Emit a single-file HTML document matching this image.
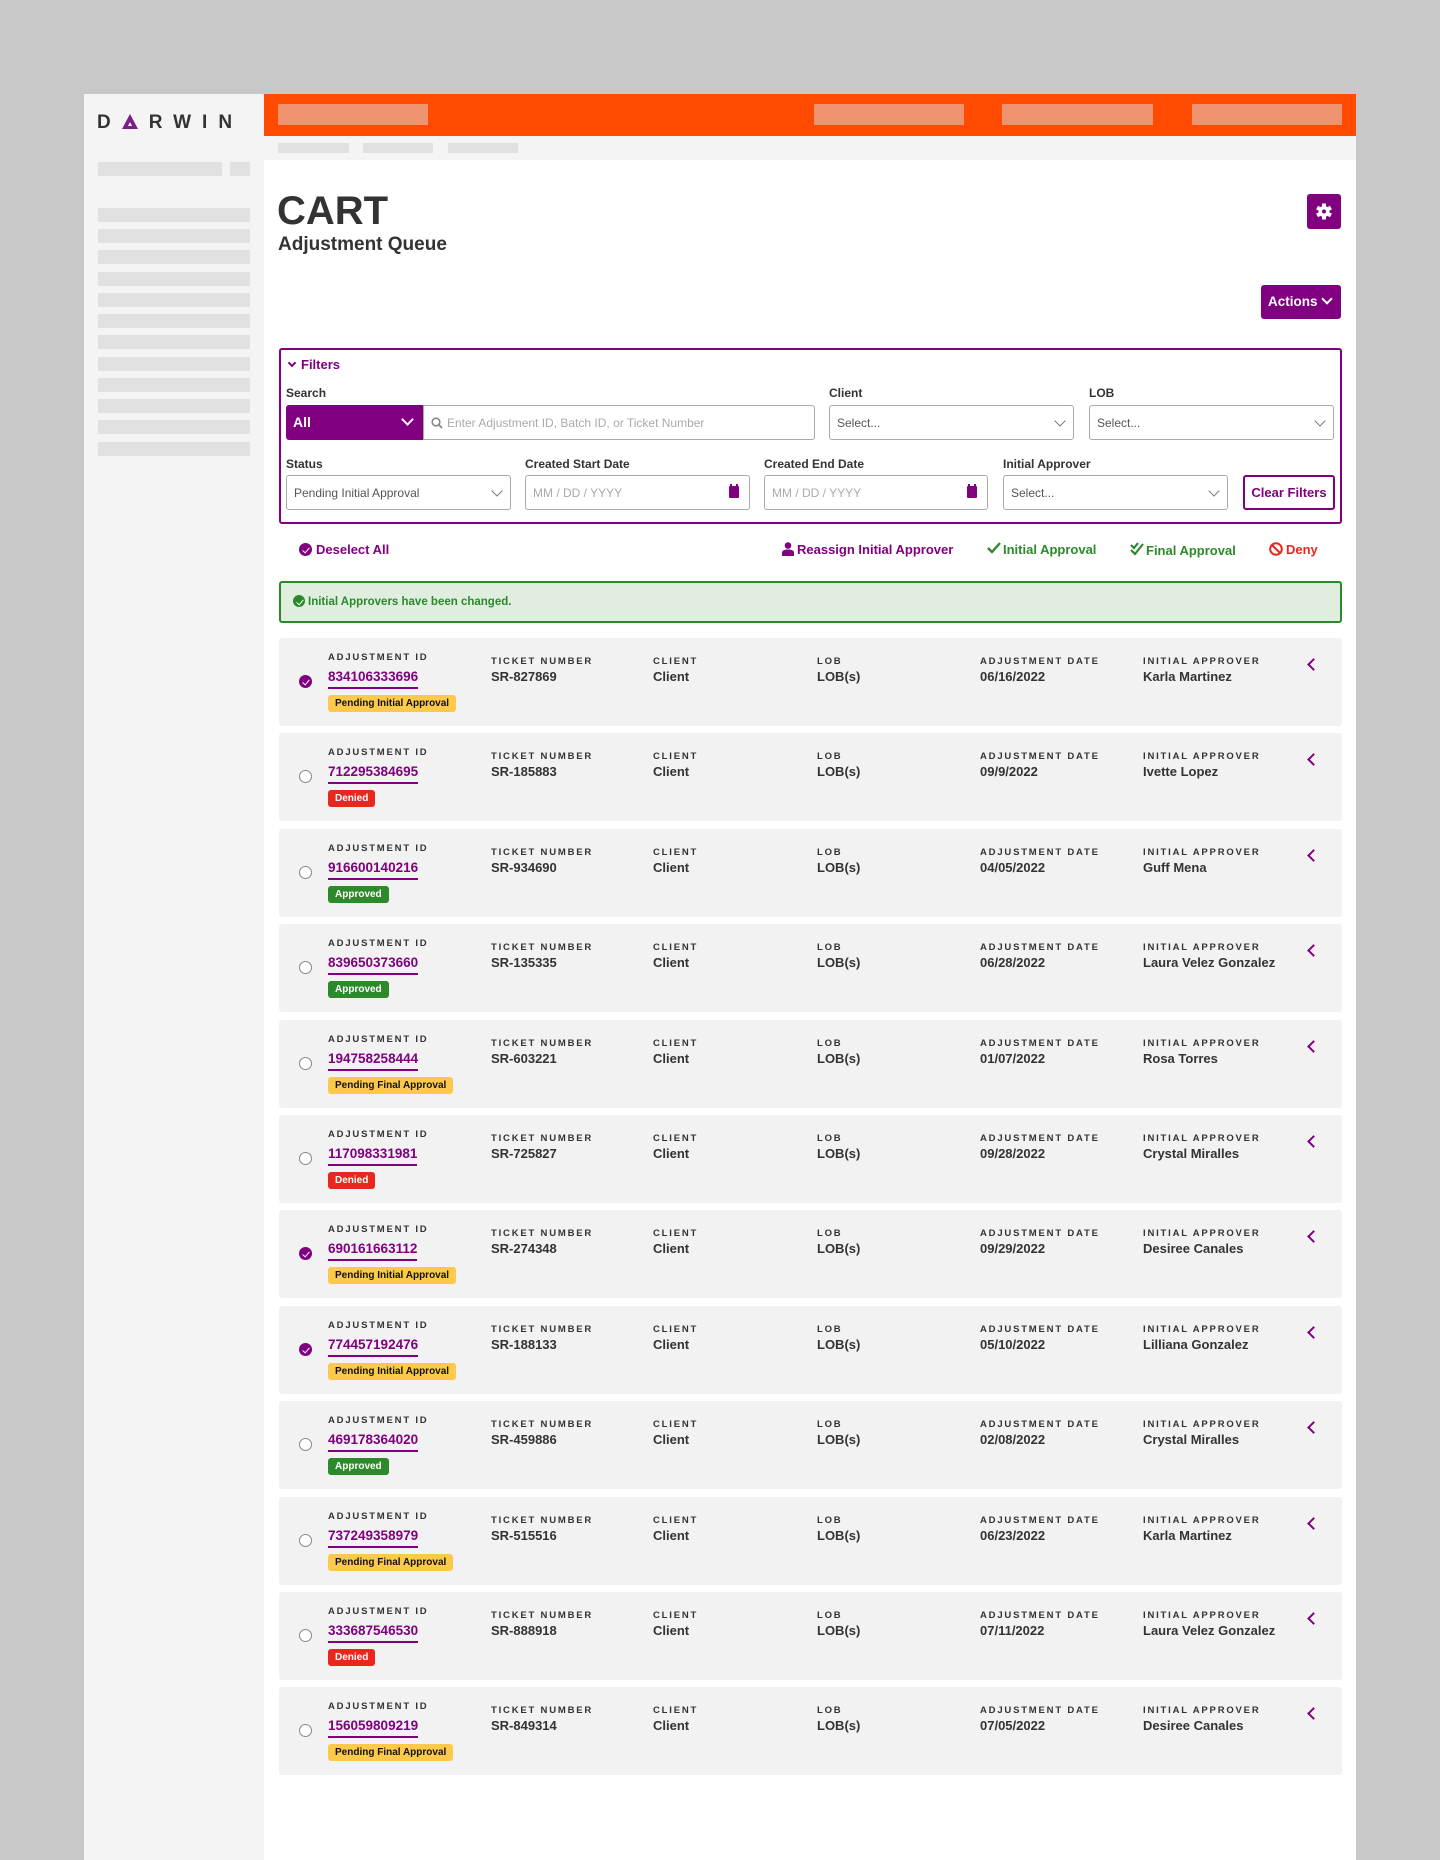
<!DOCTYPE html>
<html><head><meta charset="utf-8"><style>
*{margin:0;padding:0;box-sizing:border-box}
body{width:1440px;height:1860px;background:#c8c8c8;font-family:"Liberation Sans",Arial,sans-serif;position:relative;overflow:hidden;color:#333}
.abs{position:absolute}
.ph{position:absolute;background:#e1e1e1}
.oph{position:absolute;background:#ee9270;top:104px;height:21px}
.lbl{position:absolute;font-size:12px;font-weight:bold;color:#333}
.inp{position:absolute;border:1px solid #aaa;border-radius:3px;background:#fff;height:35px;font-size:12px;color:#555;padding:10px 7px}
.inp .car{position:absolute;right:9px;top:11px;width:8px;height:8px;border-right:1.5px solid #777;border-bottom:1.5px solid #777;transform:rotate(45deg)}
.ph2{color:#aaa}
.cal{position:absolute;right:10px;top:10px;width:10px;height:12px;background:#800080;border-radius:1px;border-top:3px solid #800080}
.cal:before,.cal:after{content:"";position:absolute;top:-5px;width:2px;height:3px;background:#800080}
.cal:before{left:1px}.cal:after{right:1px}
.row{position:absolute;left:279px;width:1063px;height:88px;background:#f2f2f2;border-radius:3px}
.row .h{position:absolute;top:18px;font-size:9.5px;font-weight:bold;letter-spacing:1.8px;color:#333}
.row .v{position:absolute;top:31px;font-size:13px;font-weight:bold;color:#333}
.row .id{position:absolute;left:49px;top:31px;font-size:13.5px;font-weight:bold;color:#800080;border-bottom:2.5px solid #800080;padding-bottom:3px}
.row .b{position:absolute;left:49px;top:57px;height:17px;font-size:10px;font-weight:bold;border-radius:3px;padding:3px 7px;line-height:11px}
.pend{background:#fcc94a;color:#111}
.den{background:#e8271e;color:#fff}
.app{background:#2c8a2a;color:#fff}
.rad{position:absolute;left:20px;top:37px;width:13px;height:13px;border:1.3px solid #888;border-radius:50%;background:#fff}
.chk{position:absolute;left:20px;top:37px;width:13px;height:13px;border-radius:50%;background:#800080}
.chk:after,.ck:after{content:"";position:absolute;left:4.5px;top:2.5px;width:3px;height:6px;border-right:1.6px solid #fff;border-bottom:1.6px solid #fff;transform:rotate(40deg)}
.ck{position:relative;display:inline-block;border-radius:50%;width:13px;height:13px;vertical-align:-2px;margin-right:4px}
.chev{position:absolute;left:1030px;top:22px;width:9px;height:9px;border-left:2.5px solid #800080;border-bottom:2.5px solid #800080;transform:rotate(45deg)}
</style></head><body>
<div class="abs" style="left:84px;top:94px;width:1272px;height:1766px;background:#fff"></div>
<div class="abs" style="left:84px;top:94px;width:180px;height:1766px;background:#f4f4f4"></div>
<div class="abs" style="left:97px;top:112px;font-size:19px;font-weight:bold;letter-spacing:11px;color:#333">D<svg width="16" height="15" viewBox="0 0 16 15" style="margin-right:11px;vertical-align:-1px"><path d="M8 0L16 15H0Z" fill="#7a1e8c"/><path d="M8 8L10 12H6Z" fill="#fff"/></svg>RWIN</div>
<div class="ph" style="left:98px;top:162px;width:124px;height:14px"></div>
<div class="ph" style="left:230px;top:162px;width:20px;height:14px"></div>
<div class="ph" style="left:98px;top:208px;width:152px;height:14px"></div>
<div class="ph" style="left:98px;top:229px;width:152px;height:14px"></div>
<div class="ph" style="left:98px;top:250px;width:152px;height:14px"></div>
<div class="ph" style="left:98px;top:272px;width:152px;height:14px"></div>
<div class="ph" style="left:98px;top:293px;width:152px;height:14px"></div>
<div class="ph" style="left:98px;top:314px;width:152px;height:14px"></div>
<div class="ph" style="left:98px;top:335px;width:152px;height:14px"></div>
<div class="ph" style="left:98px;top:357px;width:152px;height:14px"></div>
<div class="ph" style="left:98px;top:378px;width:152px;height:14px"></div>
<div class="ph" style="left:98px;top:399px;width:152px;height:14px"></div>
<div class="ph" style="left:98px;top:420px;width:152px;height:14px"></div>
<div class="ph" style="left:98px;top:442px;width:152px;height:14px"></div>

<div class="abs" style="left:264px;top:94px;width:1092px;height:42px;background:#ff4a00"></div>
<div class="oph" style="left:278px;width:150px"></div>
<div class="oph" style="left:814px;width:150px"></div>
<div class="oph" style="left:1002px;width:151px"></div>
<div class="oph" style="left:1192px;width:150px"></div>
<div class="abs" style="left:264px;top:136px;width:1092px;height:24px;background:#f4f4f4"></div>
<div class="ph" style="left:278px;top:143px;width:71px;height:10px"></div>
<div class="ph" style="left:363px;top:143px;width:70px;height:10px"></div>
<div class="ph" style="left:448px;top:143px;width:70px;height:10px"></div>

<div class="abs" style="left:277px;top:189px;font-size:40px;font-weight:bold;color:#333">CART</div>
<div class="abs" style="left:278px;top:234px;font-size:19px;font-weight:bold;color:#333">Adjustment Queue</div>
<div class="abs" style="left:1307px;top:194px;width:34px;height:35px;background:#800080;border-radius:3px">
<svg width="34" height="35" viewBox="0 0 34 35"><g transform="translate(17 17.5)" fill="#fff"><circle r="5.5"/><rect x="-2" y="-8" width="4" height="16"/><rect x="-2" y="-8" width="4" height="16" transform="rotate(60)"/><rect x="-2" y="-8" width="4" height="16" transform="rotate(120)"/><circle r="2" fill="#800080"/></g></svg></div>
<div class="abs" style="left:1261px;top:285px;width:80px;height:34px;background:#800080;border-radius:3px;color:#fff;font-size:13.5px;font-weight:bold;line-height:34px;padding-left:7px">Actions<span style="position:absolute;right:10px;top:10px;width:8px;height:8px;border-right:2px solid #fff;border-bottom:2px solid #fff;transform:rotate(45deg)"></span></div>

<div class="abs" style="left:279px;top:348px;width:1063px;height:176px;border:2px solid #800080;border-radius:3px"></div>
<div class="abs" style="left:287px;top:357px;font-size:13px;font-weight:bold;color:#800080"><span style="display:inline-block;width:6px;height:6px;border-right:2px solid #800080;border-bottom:2px solid #800080;transform:rotate(45deg);margin:0 6px 3px 2px"></span>Filters</div>
<div class="lbl" style="left:286px;top:386px">Search</div>
<div class="lbl" style="left:829px;top:386px">Client</div>
<div class="lbl" style="left:1089px;top:386px">LOB</div>
<div class="abs" style="left:286px;top:405px;width:138px;height:35px;background:#800080;border-radius:3px 0 0 3px;color:#fff;font-size:14px;font-weight:bold;padding:9px 7px">All<span style="position:absolute;right:12px;top:10px;width:9px;height:9px;border-right:2px solid #fff;border-bottom:2px solid #fff;transform:rotate(45deg)"></span></div>
<div class="inp ph2" style="left:423px;top:405px;width:392px;border-radius:0 3px 3px 0;padding-left:23px"><svg width="12" height="12" viewBox="0 0 12 12" style="position:absolute;left:7px;top:11px"><circle cx="5" cy="5" r="3.8" fill="none" stroke="#888" stroke-width="1.6"/><path d="M8 8L11 11" stroke="#888" stroke-width="1.8"/></svg>Enter Adjustment ID, Batch ID, or Ticket Number</div>
<div class="inp" style="left:829px;top:405px;width:245px">Select...<span class="car"></span></div>
<div class="inp" style="left:1089px;top:405px;width:245px">Select...<span class="car"></span></div>
<div class="lbl" style="left:286px;top:457px">Status</div>
<div class="lbl" style="left:525px;top:457px">Created Start Date</div>
<div class="lbl" style="left:764px;top:457px">Created End Date</div>
<div class="lbl" style="left:1003px;top:457px">Initial Approver</div>
<div class="inp" style="left:286px;top:475px;width:225px">Pending Initial Approval<span class="car"></span></div>
<div class="inp ph2" style="left:525px;top:475px;width:225px">MM / DD / YYYY<span class="cal"></span></div>
<div class="inp ph2" style="left:764px;top:475px;width:224px">MM / DD / YYYY<span class="cal"></span></div>
<div class="inp" style="left:1003px;top:475px;width:225px">Select...<span class="car"></span></div>
<div class="abs" style="left:1243px;top:475px;width:92px;height:35px;border:2px solid #800080;border-radius:3px;color:#800080;font-size:13px;font-weight:bold;text-align:center;line-height:31px">Clear Filters</div>

<div class="abs" style="left:299px;top:542px;font-size:13px;font-weight:bold;color:#800080"><span class="ck" style="background:#800080"></span>Deselect All</div>
<div class="abs" style="left:782px;top:542px;font-size:13px;font-weight:bold;color:#800080"><svg width="12" height="14" viewBox="0 0 12 14" style="vertical-align:-2px;margin-right:3px"><circle cx="6" cy="3.5" r="3.3" fill="#800080"/><path d="M0 14V11C0 8.5 2 7.5 6 7.5S12 8.5 12 11V14Z" fill="#800080"/></svg>Reassign Initial Approver</div>
<div class="abs" style="left:987px;top:542px;font-size:13px;font-weight:bold;color:#2c8a2a"><svg width="14" height="12" viewBox="0 0 14 12" style="margin-right:2px"><path d="M1 6L5 10L13 1" fill="none" stroke="#2c8a2a" stroke-width="2.4"/></svg>Initial Approval</div>
<div class="abs" style="left:1130px;top:542px;font-size:13px;font-weight:bold;color:#2c8a2a"><svg width="14" height="14" viewBox="0 0 14 14" style="margin-right:2px;vertical-align:-1px"><path d="M1 8L5 12L13 2M1 3L4 6L8 1" fill="none" stroke="#2c8a2a" stroke-width="2.2"/></svg>Final Approval</div>
<div class="abs" style="left:1269px;top:542px;font-size:13px;font-weight:bold;color:#e8271e"><svg width="14" height="14" viewBox="0 0 14 14" style="vertical-align:-2px;margin-right:3px"><circle cx="7" cy="7" r="5.8" fill="none" stroke="#e8271e" stroke-width="2"/><path d="M3 3L11 11" stroke="#e8271e" stroke-width="2"/></svg>Deny</div>

<div class="abs" style="left:279px;top:581px;width:1063px;height:42px;background:#dfeedf;border:2px solid #2a8a2a;border-radius:3px;font-size:11.5px;font-weight:bold;color:#2a8a2a;padding:12px 12px"><span class="ck" style="background:#2a8a2a;width:12px;height:12px;margin-right:3px"></span>Initial Approvers have been changed.</div>

<div class="row" style="top:638px"><span class="chk"></span><div class="h" style="left:49px;top:14px">ADJUSTMENT ID</div><div class="id">834106333696</div><div class="b pend">Pending Initial Approval</div><div class="h" style="left:212px">TICKET NUMBER</div><div class="v" style="left:212px">SR-827869</div><div class="h" style="left:374px">CLIENT</div><div class="v" style="left:374px">Client</div><div class="h" style="left:538px">LOB</div><div class="v" style="left:538px">LOB(s)</div><div class="h" style="left:701px">ADJUSTMENT DATE</div><div class="v" style="left:701px">06/16/2022</div><div class="h" style="left:864px">INITIAL APPROVER</div><div class="v" style="left:864px">Karla Martinez</div><span class="chev"></span></div>
<div class="row" style="top:733px"><span class="rad"></span><div class="h" style="left:49px;top:14px">ADJUSTMENT ID</div><div class="id">712295384695</div><div class="b den">Denied</div><div class="h" style="left:212px">TICKET NUMBER</div><div class="v" style="left:212px">SR-185883</div><div class="h" style="left:374px">CLIENT</div><div class="v" style="left:374px">Client</div><div class="h" style="left:538px">LOB</div><div class="v" style="left:538px">LOB(s)</div><div class="h" style="left:701px">ADJUSTMENT DATE</div><div class="v" style="left:701px">09/9/2022</div><div class="h" style="left:864px">INITIAL APPROVER</div><div class="v" style="left:864px">Ivette Lopez</div><span class="chev"></span></div>
<div class="row" style="top:829px"><span class="rad"></span><div class="h" style="left:49px;top:14px">ADJUSTMENT ID</div><div class="id">916600140216</div><div class="b app">Approved</div><div class="h" style="left:212px">TICKET NUMBER</div><div class="v" style="left:212px">SR-934690</div><div class="h" style="left:374px">CLIENT</div><div class="v" style="left:374px">Client</div><div class="h" style="left:538px">LOB</div><div class="v" style="left:538px">LOB(s)</div><div class="h" style="left:701px">ADJUSTMENT DATE</div><div class="v" style="left:701px">04/05/2022</div><div class="h" style="left:864px">INITIAL APPROVER</div><div class="v" style="left:864px">Guff Mena</div><span class="chev"></span></div>
<div class="row" style="top:924px"><span class="rad"></span><div class="h" style="left:49px;top:14px">ADJUSTMENT ID</div><div class="id">839650373660</div><div class="b app">Approved</div><div class="h" style="left:212px">TICKET NUMBER</div><div class="v" style="left:212px">SR-135335</div><div class="h" style="left:374px">CLIENT</div><div class="v" style="left:374px">Client</div><div class="h" style="left:538px">LOB</div><div class="v" style="left:538px">LOB(s)</div><div class="h" style="left:701px">ADJUSTMENT DATE</div><div class="v" style="left:701px">06/28/2022</div><div class="h" style="left:864px">INITIAL APPROVER</div><div class="v" style="left:864px">Laura Velez Gonzalez</div><span class="chev"></span></div>
<div class="row" style="top:1020px"><span class="rad"></span><div class="h" style="left:49px;top:14px">ADJUSTMENT ID</div><div class="id">194758258444</div><div class="b pend">Pending Final Approval</div><div class="h" style="left:212px">TICKET NUMBER</div><div class="v" style="left:212px">SR-603221</div><div class="h" style="left:374px">CLIENT</div><div class="v" style="left:374px">Client</div><div class="h" style="left:538px">LOB</div><div class="v" style="left:538px">LOB(s)</div><div class="h" style="left:701px">ADJUSTMENT DATE</div><div class="v" style="left:701px">01/07/2022</div><div class="h" style="left:864px">INITIAL APPROVER</div><div class="v" style="left:864px">Rosa Torres</div><span class="chev"></span></div>
<div class="row" style="top:1115px"><span class="rad"></span><div class="h" style="left:49px;top:14px">ADJUSTMENT ID</div><div class="id">117098331981</div><div class="b den">Denied</div><div class="h" style="left:212px">TICKET NUMBER</div><div class="v" style="left:212px">SR-725827</div><div class="h" style="left:374px">CLIENT</div><div class="v" style="left:374px">Client</div><div class="h" style="left:538px">LOB</div><div class="v" style="left:538px">LOB(s)</div><div class="h" style="left:701px">ADJUSTMENT DATE</div><div class="v" style="left:701px">09/28/2022</div><div class="h" style="left:864px">INITIAL APPROVER</div><div class="v" style="left:864px">Crystal Miralles</div><span class="chev"></span></div>
<div class="row" style="top:1210px"><span class="chk"></span><div class="h" style="left:49px;top:14px">ADJUSTMENT ID</div><div class="id">690161663112</div><div class="b pend">Pending Initial Approval</div><div class="h" style="left:212px">TICKET NUMBER</div><div class="v" style="left:212px">SR-274348</div><div class="h" style="left:374px">CLIENT</div><div class="v" style="left:374px">Client</div><div class="h" style="left:538px">LOB</div><div class="v" style="left:538px">LOB(s)</div><div class="h" style="left:701px">ADJUSTMENT DATE</div><div class="v" style="left:701px">09/29/2022</div><div class="h" style="left:864px">INITIAL APPROVER</div><div class="v" style="left:864px">Desiree Canales</div><span class="chev"></span></div>
<div class="row" style="top:1306px"><span class="chk"></span><div class="h" style="left:49px;top:14px">ADJUSTMENT ID</div><div class="id">774457192476</div><div class="b pend">Pending Initial Approval</div><div class="h" style="left:212px">TICKET NUMBER</div><div class="v" style="left:212px">SR-188133</div><div class="h" style="left:374px">CLIENT</div><div class="v" style="left:374px">Client</div><div class="h" style="left:538px">LOB</div><div class="v" style="left:538px">LOB(s)</div><div class="h" style="left:701px">ADJUSTMENT DATE</div><div class="v" style="left:701px">05/10/2022</div><div class="h" style="left:864px">INITIAL APPROVER</div><div class="v" style="left:864px">Lilliana Gonzalez</div><span class="chev"></span></div>
<div class="row" style="top:1401px"><span class="rad"></span><div class="h" style="left:49px;top:14px">ADJUSTMENT ID</div><div class="id">469178364020</div><div class="b app">Approved</div><div class="h" style="left:212px">TICKET NUMBER</div><div class="v" style="left:212px">SR-459886</div><div class="h" style="left:374px">CLIENT</div><div class="v" style="left:374px">Client</div><div class="h" style="left:538px">LOB</div><div class="v" style="left:538px">LOB(s)</div><div class="h" style="left:701px">ADJUSTMENT DATE</div><div class="v" style="left:701px">02/08/2022</div><div class="h" style="left:864px">INITIAL APPROVER</div><div class="v" style="left:864px">Crystal Miralles</div><span class="chev"></span></div>
<div class="row" style="top:1497px"><span class="rad"></span><div class="h" style="left:49px;top:14px">ADJUSTMENT ID</div><div class="id">737249358979</div><div class="b pend">Pending Final Approval</div><div class="h" style="left:212px">TICKET NUMBER</div><div class="v" style="left:212px">SR-515516</div><div class="h" style="left:374px">CLIENT</div><div class="v" style="left:374px">Client</div><div class="h" style="left:538px">LOB</div><div class="v" style="left:538px">LOB(s)</div><div class="h" style="left:701px">ADJUSTMENT DATE</div><div class="v" style="left:701px">06/23/2022</div><div class="h" style="left:864px">INITIAL APPROVER</div><div class="v" style="left:864px">Karla Martinez</div><span class="chev"></span></div>
<div class="row" style="top:1592px"><span class="rad"></span><div class="h" style="left:49px;top:14px">ADJUSTMENT ID</div><div class="id">333687546530</div><div class="b den">Denied</div><div class="h" style="left:212px">TICKET NUMBER</div><div class="v" style="left:212px">SR-888918</div><div class="h" style="left:374px">CLIENT</div><div class="v" style="left:374px">Client</div><div class="h" style="left:538px">LOB</div><div class="v" style="left:538px">LOB(s)</div><div class="h" style="left:701px">ADJUSTMENT DATE</div><div class="v" style="left:701px">07/11/2022</div><div class="h" style="left:864px">INITIAL APPROVER</div><div class="v" style="left:864px">Laura Velez Gonzalez</div><span class="chev"></span></div>
<div class="row" style="top:1687px"><span class="rad"></span><div class="h" style="left:49px;top:14px">ADJUSTMENT ID</div><div class="id">156059809219</div><div class="b pend">Pending Final Approval</div><div class="h" style="left:212px">TICKET NUMBER</div><div class="v" style="left:212px">SR-849314</div><div class="h" style="left:374px">CLIENT</div><div class="v" style="left:374px">Client</div><div class="h" style="left:538px">LOB</div><div class="v" style="left:538px">LOB(s)</div><div class="h" style="left:701px">ADJUSTMENT DATE</div><div class="v" style="left:701px">07/05/2022</div><div class="h" style="left:864px">INITIAL APPROVER</div><div class="v" style="left:864px">Desiree Canales</div><span class="chev"></span></div>
</body></html>
